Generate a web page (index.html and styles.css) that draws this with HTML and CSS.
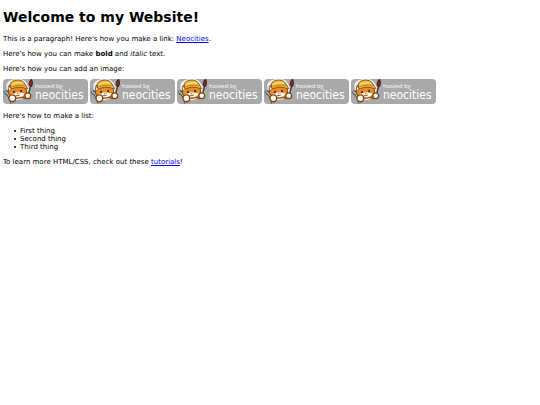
FILE: index.html
```
<!DOCTYPE html>
<html lang="en">
<head>
    <meta charset="UTF-8">
    <meta name="viewport" content="width=device-width, initial-scale=1.0">
    <title>My Website</title>
    <link rel="stylesheet" href="styles.css">
</head>
<body>
    <svg class="sprite" aria-hidden="true">
        <symbol id="cat" viewBox="0 0 74 60">
            <!-- light edge -->
            <path d="M10 20Q6 7 27 3Q46 -1 54 13L59 24Q56 44 38 47Q16 50 10 36ZM61 38L66 4M10 32l10 15" fill="#eee" stroke="#eee" stroke-width="6"/>
            <!-- wrench -->
            <path d="M3 28l4 6 5-1 2-5M9 34l9 14l2 10" fill="none" stroke="#444" stroke-width="8"/>
            <path d="M3 28l4 6 5-1 2-5M9 34l9 14l2 10" fill="none" stroke="#b4b4b4" stroke-width="4"/>
            <!-- arm -->
            <path d="M46 42Q53 48 58 40" fill="none" stroke="#7a4512" stroke-width="8"/>
            <path d="M46 42Q53 47 58 40" fill="none" stroke="#e98b24" stroke-width="5"/>
            <!-- head -->
            <path d="M13 16Q8 34 16 41Q29 50 44 45Q57 41 55 27L52 14Z" fill="#ea8a25" stroke="#5f3513" stroke-width="2"/>
            <path d="M16 37Q24 36 32 32Q42 33 51 35Q48 42 40 43Q25 46 16 37Z" fill="#fff6e6"/>
            <path d="M11 17l7 6-5 6z" fill="#fff" stroke="#5f3513"/>
            <ellipse cx="25" cy="31" rx="2" ry="3" fill="#2b1a10"/>
            <ellipse cx="42" cy="29" rx="2" ry="3" fill="#2b1a10"/>
            <path d="M32 34h4l-2 3z" fill="#6b2d14"/>
            <path d="M30 40q5 1 9-2" fill="none" stroke="#6b2d14" stroke-width="2"/>
            <!-- helmet -->
            <path d="M16 17Q14 7 28 3Q45 0 51 12L58 23Q55 25 48 21Q34 17 21 23Q16 24 16 17Z" fill="#eeb438" stroke="#6d4d14" stroke-width="2"/>
            <path d="M20 13Q32 6 47 10" fill="none" stroke="#ffdf73" stroke-width="3"/>
            <path d="M20 19Q33 12 51 17" fill="none" stroke="#b57a18" stroke-width="2"/>
            <!-- brush -->
            <path d="M60 39L65 15" stroke="#50302a" stroke-width="4"/>
            <path d="M62 15Q60 7 67 1Q71 9 67 17Z" fill="#99312a" stroke="#4a201c" stroke-width="3"/>
            <!-- paws -->
            <circle cx="21" cy="46" r="8" fill="#fffaf0" stroke="#7a4512" stroke-width="3"/>
            <circle cx="58" cy="40" r="7" fill="#fffaf0" stroke="#7a4512" stroke-width="3"/>
        </symbol>
    </svg>

    <h1>Welcome to my Website!</h1>

    <p>This is a paragraph! Here's how you make a link: <a href="#">Neocities</a>.</p>

    <p>Here's how you can make <strong>bold</strong> and <em>italic</em> text.</p>

    <p>Here's how you can add an image:</p>
    <div class="badges">
        <div class="badge">
            <svg class="cat" aria-hidden="true"><use href="#cat"/></svg>
            <div class="badge-text"><div class="hosted">hosted by</div><div class="name">neocities</div></div>
        </div>
        <div class="badge">
            <svg class="cat" aria-hidden="true"><use href="#cat"/></svg>
            <div class="badge-text"><div class="hosted">hosted by</div><div class="name">neocities</div></div>
        </div>
        <div class="badge">
            <svg class="cat" aria-hidden="true"><use href="#cat"/></svg>
            <div class="badge-text"><div class="hosted">hosted by</div><div class="name">neocities</div></div>
        </div>
        <div class="badge">
            <svg class="cat" aria-hidden="true"><use href="#cat"/></svg>
            <div class="badge-text"><div class="hosted">hosted by</div><div class="name">neocities</div></div>
        </div>
        <div class="badge">
            <svg class="cat" aria-hidden="true"><use href="#cat"/></svg>
            <div class="badge-text"><div class="hosted">hosted by</div><div class="name">neocities</div></div>
        </div>
    </div>

    <p>Here's how to make a list:</p>

    <ul>
        <li>First thing</li>
        <li>Second thing</li>
        <li>Third thing</li>
    </ul>

    <p>To learn more HTML/CSS, check out these <a href="#">tutorials</a>!</p>
</body>
</html>
```

FILE: styles.css
```
body {
    margin: 9px 3px;
    background-color: #fff;
    color: #000;
    font-family: Verdana, 'DejaVu Sans', sans-serif;
    font-size: 7px;
    line-height: 8px;
}

h1 {
    margin: 0 0 9px;
    font-size: 14px;
    line-height: 17px;
}

p {
    margin: 7px 0;
}

a {
    color: #0000ee;
}

ul {
    margin: 7px 0;
    padding-left: 11px;
    list-style: none;
}

li {
    display: flex;
    align-items: center;
    gap: 4px;
}

li::before {
    content: '';
    width: 2px;
    height: 2px;
    border-radius: 1px;
    background-color: #000;
}

.sprite {
    position: absolute;
    width: 0;
    height: 0;
}

.badges {
    display: flex;
    flex-wrap: wrap;
    gap: 2px;
    margin: -1px 0 8px;
}

.badge {
    display: flex;
    width: 85px;
    height: 25px;
    border-radius: 4px;
    background-color: #a9a9a9;
    color: #fff;
    font-family: 'DejaVu Sans Condensed', 'Open Sans', sans-serif;
}

.cat {
    width: 32px;
    height: 25px;
}

.badge-text {
    padding-top: 4px;
}

.hosted {
    font-family: 'Open Sans', sans-serif;
    font-size: 6px;
    line-height: 6px;
}

.name {
    font-size: 12px;
    line-height: 12px;
}
```
